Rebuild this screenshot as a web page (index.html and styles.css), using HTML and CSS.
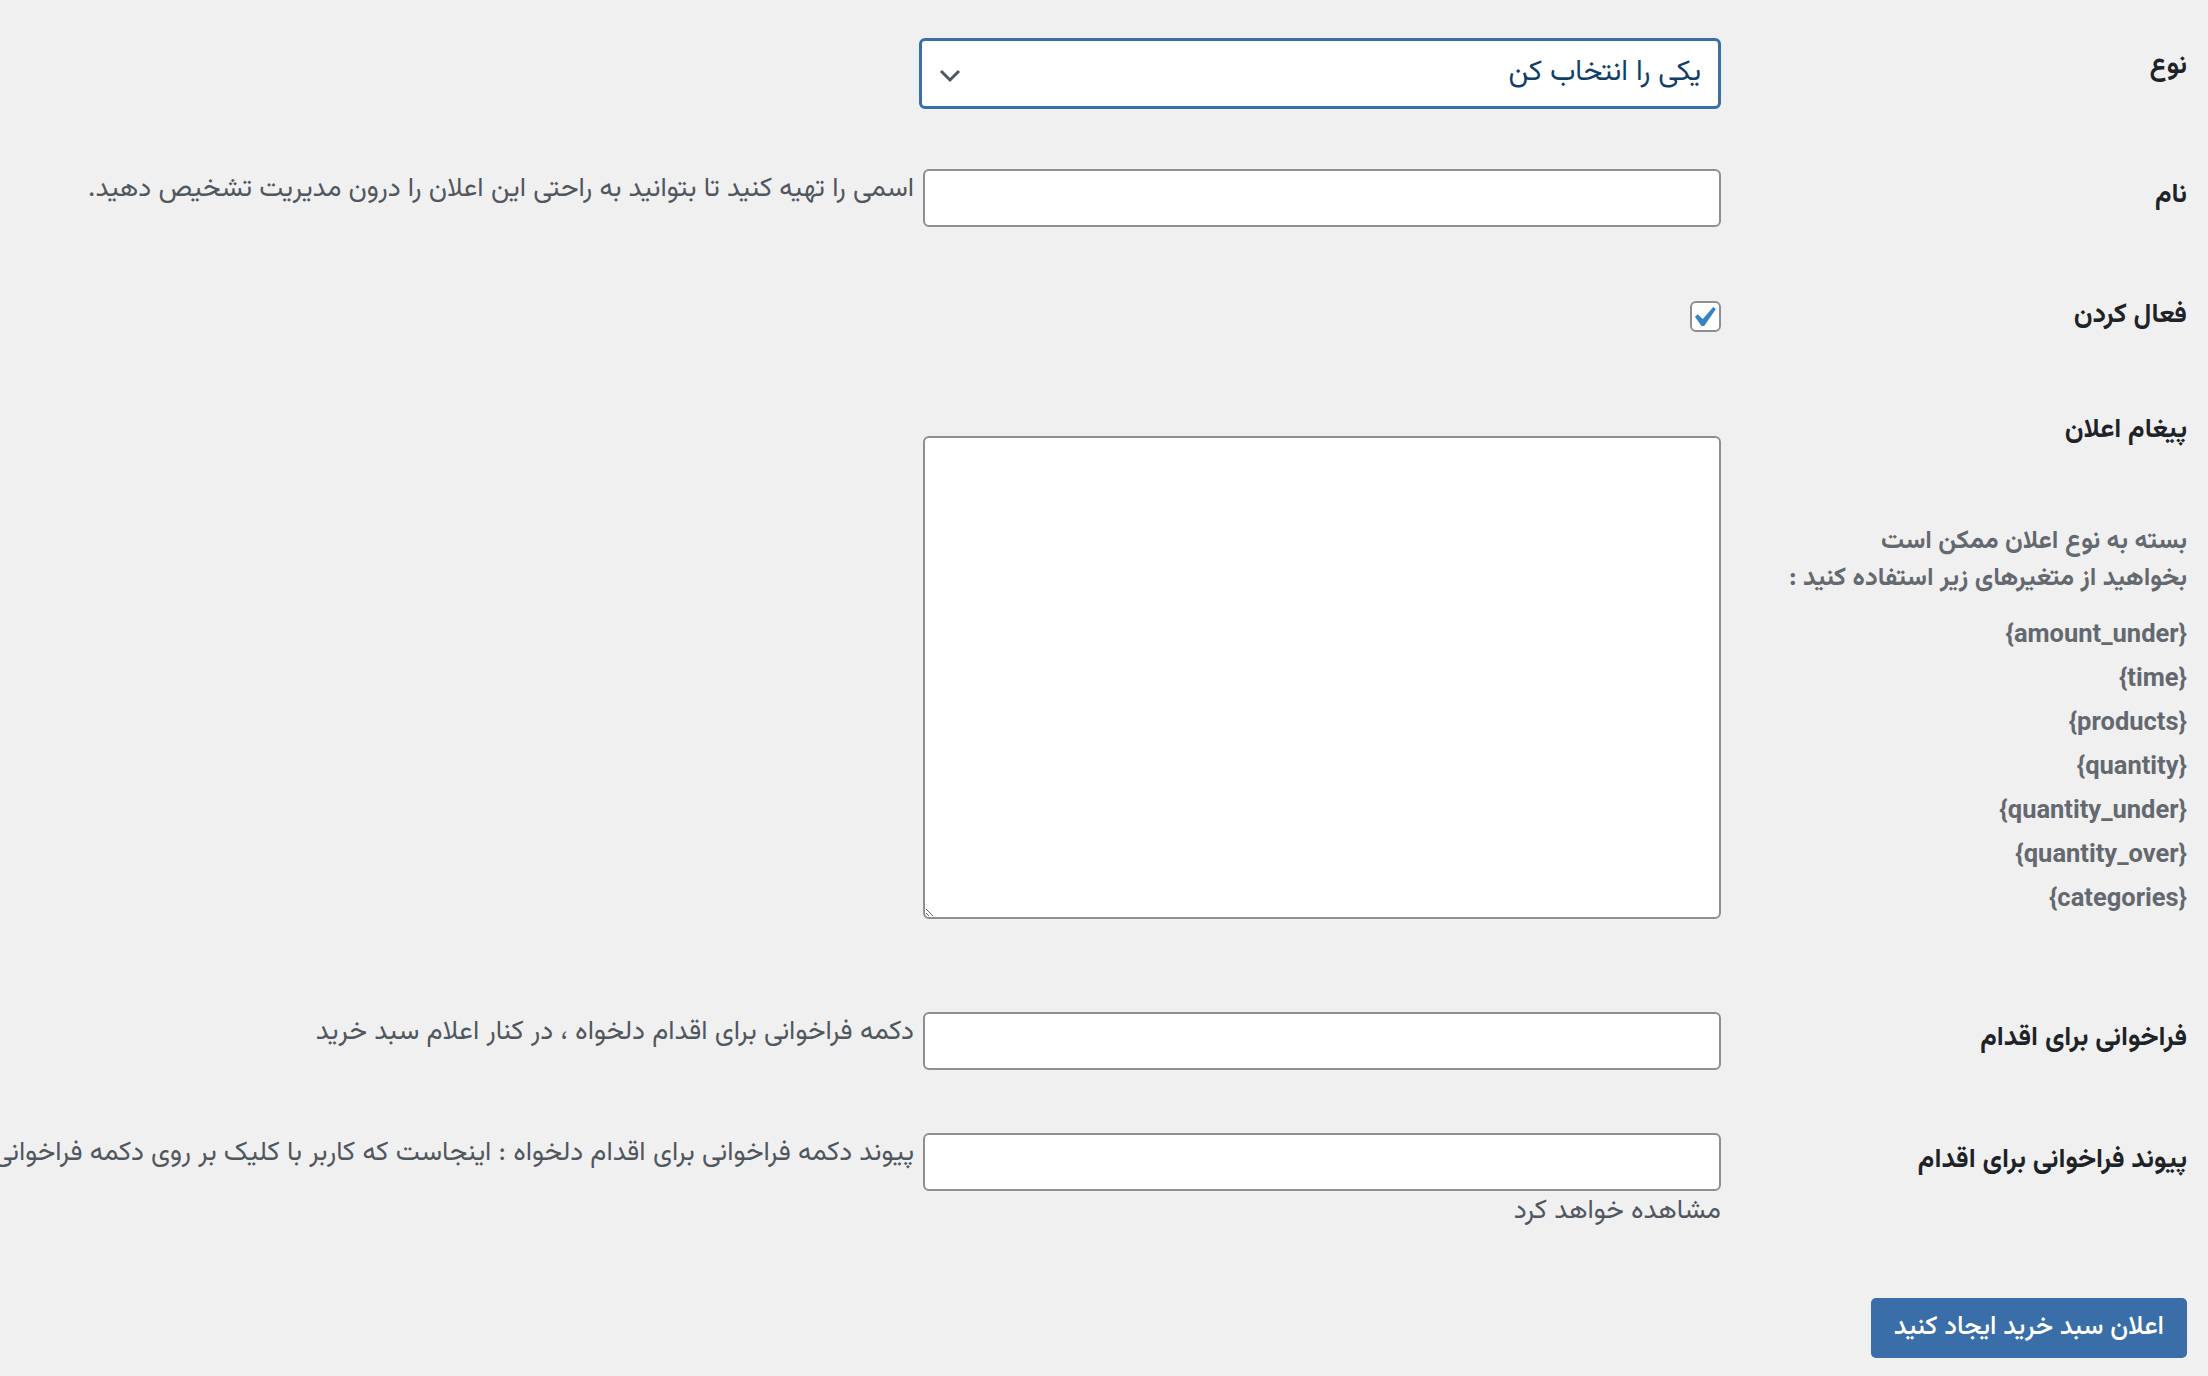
FILE: index.html
```html
<!DOCTYPE html>
<html lang="fa" dir="rtl">
<head>
<meta charset="utf-8">
<title>اعلان سبد خرید</title>
<link rel="stylesheet" href="styles.css">
</head>
<body>
<form class="form">
  <div class="row row-type">
    <div class="th"><label class="label">نوع</label></div>
    <div class="td">
      <div class="select">
        <span class="select-value">یکی را انتخاب کن</span>
        <svg class="chevron" width="22" height="14" viewBox="0 0 22 14"><polyline points="2,2 11,11 20,2" fill="none" stroke="#50575e" stroke-width="3"/></svg>
      </div>
    </div>
  </div>

  <div class="row row-name">
    <div class="th"><label class="label">نام</label></div>
    <div class="td">
      <input class="text-input" type="text"><span class="desc">اسمی را تهیه کنید تا بتوانید به راحتی این اعلان را درون مدیریت تشخیص دهید.</span>
    </div>
  </div>

  <div class="row row-active">
    <div class="th"><label class="label">فعال کردن</label></div>
    <div class="td">
      <span class="checkbox" role="checkbox" aria-checked="true">
        <svg width="23" height="21" viewBox="5.3 4.4 11.4 10.3"><path d="M14.83 4.89l1.34.94-5.81 8.38H9.02L5.78 9.67l1.34-1.250 2.57 2.4z" fill="#3582c4"/></svg>
      </span>
    </div>
  </div>

  <div class="row row-message">
    <div class="th">
      <label class="label">پیغام اعلان</label>
      <p class="th-desc">بسته به نوع اعلان ممکن است<br>بخواهید از متغیرهای زیر استفاده کنید :</p>
      <ul class="vars">
        <li>{amount_under}</li>
        <li>{time}</li>
        <li>{products}</li>
        <li>{quantity}</li>
        <li>{quantity_under}</li>
        <li>{quantity_over}</li>
        <li>{categories}</li>
      </ul>
    </div>
    <div class="td">
      <textarea class="textarea"></textarea>
    </div>
  </div>

  <div class="row row-cta">
    <div class="th"><label class="label">فراخوانی برای اقدام</label></div>
    <div class="td">
      <input class="text-input" type="text"><span class="desc">دکمه فراخوانی برای اقدام دلخواه ، در کنار اعلام سبد خرید</span>
    </div>
  </div>

  <div class="row row-link">
    <div class="th"><label class="label">پیوند فراخوانی برای اقدام</label></div>
    <div class="td">
      <span class="nowrap"><input class="text-input" type="text"><span class="desc">پیوند دکمه فراخوانی برای اقدام دلخواه : اینجاست که کاربر با کلیک بر روی دکمه فراخوانی برای اقدام، به آن هدایت می‌شود و آن را</span></span><br><span class="desc-plain">مشاهده خواهد کرد</span>
    </div>
  </div>

  <div class="submit">
    <button class="button-primary" type="button">اعلان سبد خرید ایجاد کنید</button>
  </div>
</form>
</body>
</html>
```

FILE: styles.css
```css
html, body {
  margin: 0;
  padding: 0;
  overflow: hidden;
  background: #f0f0f1;
}

body {
  direction: rtl;
  font-family: "Vazirmatn", Roboto, "Noto Sans Arabic", "DejaVu Sans", sans-serif;
  color: #1d2327;
  width: 2208px;
  height: 1376px;
}

.form {
  padding: 38px 21px 0 0;
}

.row {
  display: flex;
  align-items: flex-start;
}

.th {
  width: 466px;
  flex: none;
  font-weight: 700;
  font-size: 27px;
  line-height: 40px;
  color: #1d2327;
}

.label {
  display: block;
}

.td {
  flex: 1;
  min-width: 0;
  font-size: 27px;
  line-height: 42px;
  color: #50575e;
}

/* row spacing */
.row-type .th { padding-top: 9px; }

.row-name { margin-top: 60px; }
.row-name .th { padding-top: 7px; }

.row-active { margin-top: 69px; }
.row-active .td { padding-top: 5px; }

.row-message { margin-top: 75px; }
.row-message .td { padding-top: 25px; }

.row-cta { margin-top: 90px; }
.row-cta .th { padding-top: 7px; }

.row-link { margin-top: 63px; }
.row-link .th { padding-top: 8px; }

/* select */
.select {
  position: relative;
  box-sizing: border-box;
  width: 802px;
  height: 71px;
  background: #fff;
  border: 3px solid #3a6ea9;
  border-radius: 6px;
  padding-right: 17px;
  font-size: 29px;
  line-height: 65px;
  color: #123f68;
}

.chevron {
  position: absolute;
  left: 17px;
  top: 28px;
}

/* text inputs */
.text-input {
  box-sizing: border-box;
  width: 798px;
  height: 58px;
  margin: 0;
  vertical-align: top;
  background: #fff;
  border: 2px solid #8c8f94;
  border-radius: 6px;
  font: inherit;
}

.desc {
  padding-right: 9px;
}

.nowrap {
  white-space: nowrap;
}

/* checkbox */
.checkbox {
  box-sizing: border-box;
  display: flex;
  align-items: center;
  justify-content: center;
  width: 31px;
  height: 31px;
  background: #fff;
  border: 2px solid #8c8f94;
  border-radius: 6px;
}

/* textarea */
.textarea {
  display: block;
  box-sizing: border-box;
  width: 798px;
  height: 483px;
  margin: 0;
  background: #fff;
  border: 2px solid #8c8f94;
  border-radius: 6px;
}

/* message header descriptions */
.th-desc {
  margin: 73px 0 0;
  font-size: 25.5px;
  line-height: 37px;
  color: #646970;
}

.vars {
  list-style: none;
  margin: 16px 0 0;
  padding: 0;
  font-size: 25.5px;
  line-height: 44px;
  color: #646970;
}

/* submit */
.submit {
  margin-top: 65px;
}

.button-primary {
  box-sizing: border-box;
  height: 60px;
  padding: 0 23px;
  background: #3a6ea9;
  color: #fff;
  border: none;
  border-radius: 5px;
  font-family: inherit;
  font-size: 26px;
  font-weight: 500;
  line-height: 60px;
}
```
